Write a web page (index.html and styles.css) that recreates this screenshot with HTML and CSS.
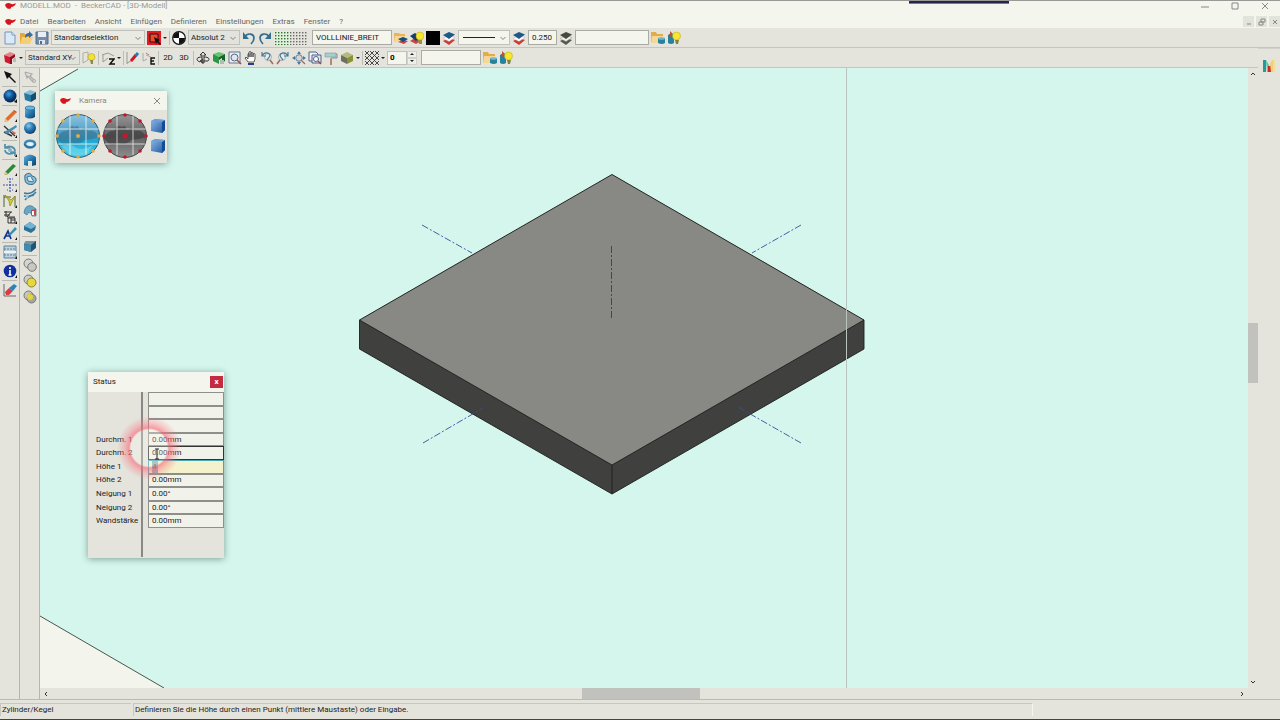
FILE: index.html
```html
<!DOCTYPE html>
<html lang="de">
<head>
<meta charset="utf-8">
<title>MODELL.MOD - BeckerCAD - [3D-Modell]</title>
<link rel="stylesheet" href="styles.css">
</head>
<body>
<svg class="defs" aria-hidden="true">
  <defs>
    <linearGradient id="blue" x1="0" y1="0" x2="1" y2="1"><stop offset="0" stop-color="#6fb4dc"/><stop offset=".5" stop-color="#2678ad"/><stop offset="1" stop-color="#0b3e6c"/></linearGradient>
    <radialGradient id="ball" cx=".38" cy=".32" r=".75"><stop offset="0" stop-color="#8bc8ea"/><stop offset=".45" stop-color="#2c7fb8"/><stop offset="1" stop-color="#08355f"/></radialGradient>
    <radialGradient id="darkball" cx=".4" cy=".35" r=".7"><stop offset="0" stop-color="#3f9fe0"/><stop offset=".5" stop-color="#0d4a8a"/><stop offset="1" stop-color="#041c3c"/></radialGradient>
    <linearGradient id="sea" x1="0" y1="0" x2="0" y2="1"><stop offset="0" stop-color="#8cc4e2"/><stop offset=".45" stop-color="#4e9cc4"/><stop offset=".6" stop-color="#1fa5cf"/><stop offset="1" stop-color="#48d0ea"/></linearGradient>
    <linearGradient id="smoke" x1="0" y1="0" x2="0" y2="1"><stop offset="0" stop-color="#959595"/><stop offset=".5" stop-color="#606060"/><stop offset="1" stop-color="#8d8d8d"/></linearGradient>
    <linearGradient id="box" x1="0" y1="0" x2="1" y2="1"><stop offset="0" stop-color="#8db9e6"/><stop offset="1" stop-color="#1b55a2"/></linearGradient>
    <pattern id="dots" width="3" height="3" patternUnits="userSpaceOnUse"><rect x="1" y="1" width="1.400" height="1.400" fill="#2d7030"/></pattern>
    <pattern id="dotsgrey" width="3" height="3" patternUnits="userSpaceOnUse"><rect x="1" y="1" width="1.400" height="1.400" fill="#666"/></pattern>
  </defs>
  <symbol id="logo" viewBox="0 0 12 8"><path d="M0 3C1 1 3 0 5 1L8 2 12 1C11 4 9 5 7 5L6 7 3 7 1 5Z" fill="#d8141c"/></symbol>
  <symbol id="chev" viewBox="0 0 8 8"><path d="M1.500 3l2.500 2.500L6.500 3" fill="none" stroke="#777" stroke-width=".9"/></symbol>
  <symbol id="new" viewBox="0 0 14 14"><path d="M2 1h7l3 3v9H2z" fill="#d9e9f7" stroke="#7795b5"/><path d="M9 1v3h3" fill="#fff" stroke="#7795b5"/></symbol>
  <symbol id="open" viewBox="0 0 14 14"><path d="M1 2h4l1 1h5v10H1z" fill="#e2a83b"/><path d="M3 6h11l-3 7H1z" fill="#f5cf73"/><path d="M6 7c0-4 2-5 4-5V0l4 4-4 3V5C8 5 7 6 6 7" fill="#356da8"/></symbol>
  <symbol id="save" viewBox="0 0 14 14"><path d="M1 1h12v12H1z" fill="#748ba9" stroke="#526c8c"/><path d="M3 1h8v5H3z" fill="#e8eef5"/><path d="M4 9h6v4H4z" fill="#dfe5ec"/><path d="M5 10h2v3H5z" fill="#526c8c"/></symbol>
  <symbol id="pick" viewBox="0 0 14 14"><path d="M0 0h14v14H0z" fill="#e41820"/><path d="M3 3h8v8H3z" fill="#e84a2a" stroke="#301010"/><path d="M7 6l6 3-2 1 3 3-1 1-3-3-1 2z" fill="#111"/></symbol>
  <symbol id="origin" viewBox="0 0 14 14"><circle cx="7" cy="7" r="6.300" fill="#fff" stroke="#111" stroke-width="1.200"/><path d="M7 7V1A6 6 0 0 0 1 7zM7 7v6A6 6 0 0 0 13 7z" fill="#111"/></symbol>
  <symbol id="undo" viewBox="0 0 14 14"><path d="M2.500 6C6 1 12 3 12 7c0 3-1 4-3 6" fill="none" stroke="#356d8c" stroke-width="1.700"/><path d="M1 1v7h6z" fill="#356d8c"/></symbol>
  <symbol id="redo" viewBox="0 0 14 14"><path d="M11.500 6C8 1 2 3 2 7c0 3 1 4 3 6" fill="none" stroke="#356d8c" stroke-width="1.700"/><path d="M13 1v7H7z" fill="#356d8c"/></symbol>
  <symbol id="grid" viewBox="0 0 34 14"><path d="M0 0h16v14H0z" fill="#e0f0dc"/><path d="M0 0h16v14H0z" fill="url(#dots)"/><path d="M16 0h17v14H16z" fill="url(#dotsgrey)"/></symbol>
  <symbol id="layers" viewBox="0 0 14 14"><path d="M1 10l6-3 6 2-6 5z" fill="#d03a34"/><path d="M1 7.500l6-3 6 2-6 4z" fill="#fff" stroke="#aaa" stroke-width=".4"/><path d="M1 4l6-3 6 2.500L7 8z" fill="#1d5a8c"/></symbol>
  <symbol id="layersgrey" viewBox="0 0 14 14"><path d="M1 10l6-3 6 2-6 5z" fill="#555850"/><path d="M1 7.500l6-3 6 2-6 4z" fill="#f0f0ea" stroke="#888" stroke-width=".4"/><path d="M1 4l6-3 6 2.500L7 8z" fill="#454942"/></symbol>
  <symbol id="folderlayers" viewBox="0 0 14 14"><path d="M0 2h5l1 1h5v8H0z" fill="#e9b45c"/><path d="M1 5h10v6H0z" fill="#f7d794"/><path d="M4 11l5-2 5 1-4 3z" fill="#c44"/><path d="M4 8l5-2 5 2-5 3z" fill="#174d78"/></symbol>
  <symbol id="folderdb" viewBox="0 0 14 14"><path d="M0 1h5l1 2h6v9H0z" fill="#e2ac4c"/><path d="M1 5h11v7H0z" fill="#f7d794"/><path d="M7 7h7v5q-3 2-7 0z" fill="#28829c"/><ellipse cx="10.500" cy="7.500" rx="3.500" ry="1.300" fill="#73b8c7"/></symbol>
  <symbol id="bulblayers" viewBox="0 0 14 14"><path d="M0 10l5-3 6 3-5 3z" fill="#c44"/><path d="M0 5l5-3 6 4-5 4z" fill="#173f66"/><circle cx="10" cy="5" r="4" fill="#f7e72e" stroke="#b5a01c" stroke-width=".5"/><path d="M8 9h4v4H9z" fill="#9a8f45"/></symbol>
  <symbol id="bulbdb" viewBox="0 0 14 14"><path d="M1 4q3-3 6 0v8q-3 2-6 0z" fill="#28829c"/><path d="M3 0l3 3-3 3z" fill="#c54e34"/><circle cx="9.500" cy="5" r="4" fill="#f7e72e" stroke="#b5a01c" stroke-width=".5"/><path d="M8 9h4l-1 4H9z" fill="#82833d"/></symbol>
  <symbol id="redcube" viewBox="0 0 14 14"><path d="M1 4l6-3 5 2-5 3z" fill="#e8808a"/><path d="M1 4l6 2v7l-5-2z" fill="#cd1c30"/><path d="M7 6l5-3v3L9 8v5H7z" fill="#8c1020"/><path d="M10 7h3v4h-3z" fill="#bbb"/></symbol>
  <symbol id="planebulb" viewBox="0 0 14 14"><path d="M1 2l5-1v8l-5 3z" fill="#e3e4dc" stroke="#999" stroke-width=".7"/><circle cx="9.500" cy="6" r="3.500" fill="#f4e32c" stroke="#a59520" stroke-width=".5"/><path d="M8 9h3v4H9z" fill="#8b8a4a"/></symbol>
  <symbol id="planez" viewBox="0 0 14 14"><path d="M1 4l6-2 6 3M2 4v7l5-4" fill="none" stroke="#999"/><path d="M8 8h5l-4 5h5" fill="none" stroke="#111" stroke-width="1.500"/></symbol>
  <symbol id="redpen" viewBox="0 0 14 14"><path d="M1 1v12M1 12l6-3" stroke="#999"/><path d="M5 10l5-6" stroke="#d01828" stroke-width="3"/><path d="M9.500 5L12 2" stroke="#257fb4" stroke-width="3"/></symbol>
  <symbol id="planee" viewBox="0 0 14 14"><path d="M1 2v8l4-2M4 4l5 2" fill="none" stroke="#aaa"/><path d="M4 2l3 2" stroke="#b97771"/><path d="M13 7H9v6h4M9 10h3" fill="none" stroke="#111" stroke-width="1.400"/></symbol>
  <symbol id="rotate3d" viewBox="0 0 14 14"><path d="M7 1L4 4h2v2C1 6 0 8 2 10l2 1M7 1l3 3H8v8H6V6M8 6c5 0 6 2 4 4H5M7 8l-3 2 3 2" fill="none" stroke="#333" stroke-width="1"/></symbol>
  <symbol id="greencube" viewBox="0 0 14 14"><path d="M1 3l6-2 6 2-6 3z" fill="#68c46e"/><path d="M1 3l6 3v7l-6-3z" fill="#2a9742"/><path d="M7 6l6-3v7l-3 2V7L7 9z" fill="#15652b"/><path d="M8 9h4v4H8z" fill="#aebcb2"/></symbol>
  <symbol id="zoomwin" viewBox="0 0 14 14"><path d="M1 1h11v11H1z" fill="#edf0f0" stroke="#687390"/><circle cx="6.500" cy="6.500" r="3.500" fill="#dce7ee" stroke="#556783"/><path d="M9 9l4 4" stroke="#98504c" stroke-width="1.600"/></symbol>
  <symbol id="hand" viewBox="0 0 14 14"><path d="M4 11L1 7l1-1 2 2V3q1-1 1 0v3-5q1-1 2 0v5-4q1-1 2 0v4-3q2-1 2 0v5l-1 3z" fill="#fff" stroke="#333" stroke-width=".8"/><path d="M4 12h6v2H4z" fill="#253b8f"/></symbol>
  <symbol id="zoomback" viewBox="0 0 14 14"><circle cx="8" cy="6" r="3.500" fill="#e4eef0" stroke="#90a4aa" stroke-width=".8"/><path d="M2 1v4h4M2 5c2-4 7-4 8-1 0 2-1 3-3 5" fill="none" stroke="#477994" stroke-width="1.200"/><path d="M10 9l3 4" stroke="#a56a60" stroke-width="1.500"/></symbol>
  <symbol id="pan4" viewBox="0 0 14 14"><path d="M7 0l2 3H5zM7 14l2-3H5zM0 7l3-2v4zM14 7l-3-2v4z" fill="#4779a2"/><circle cx="7" cy="7" r="3.300" fill="#cbd8df" stroke="#6e7e88"/><path d="M9 9l4 4" stroke="#aa6660" stroke-width="1.300"/></symbol>
  <symbol id="pages" viewBox="0 0 14 14"><path d="M1 1h7l2 2v7H1z" fill="#f1f2f5" stroke="#526089"/><path d="M4 4h9v8H4z" fill="#dfe5ed" stroke="#526089"/><circle cx="8" cy="8" r="2.500" fill="#fff" stroke="#4f6484"/><path d="M10 10l3 3" stroke="#944" stroke-width="1.300"/></symbol>
  <symbol id="roller" viewBox="0 0 14 14"><path d="M1 2h11v4H1z" fill="#a8ced1" stroke="#719ca0" stroke-width=".6"/><path d="M12 3h1v4H7v2" fill="none" stroke="#888"/><path d="M6 8h2v6H6z" fill="#b48b6a"/></symbol>
  <symbol id="olivecube" viewBox="0 0 14 14"><path d="M1 4l6-3 6 3-6 3z" fill="#b4bb7a"/><path d="M1 4l6 3v6l-6-3z" fill="#6c7061"/><path d="M7 7l6-3v6l-6 3z" fill="#8b9135"/></symbol>
  <symbol id="hatch" viewBox="0 0 14 14"><path d="M0 4l4-4M0 9L9 0M0 14L14 0M5 14l9-9M10 14l4-4M10 0l4 4M5 0l9 9M0 0l14 14M0 5l9 9M0 10l4 4" stroke="#383838" stroke-width=".9"/></symbol>
  <symbol id="em" viewBox="0 0 14 14"><path d="M1 1h3v12H1z" fill="#239c94"/><path d="M4 1l3 5v7H5z" fill="#56c7b0"/><path d="M6 7h3v6H6z" fill="#d02b28"/><path d="M8 5l2-4h1v12H9z" fill="#ead27a"/><path d="M11 1h2v12h-2z" fill="#f0dd96"/></symbol>
  <symbol id="arrow" viewBox="0 0 14 14"><path d="M1 1l8 3-2 2 6 6-1 1-6-6-2 2z" fill="#111"/></symbol>
  <symbol id="ghost" viewBox="0 0 14 14"><path d="M2 2l7 2-2 2 4 4M2 2l2 6 1-2 5 6" fill="none" stroke="#aaa" stroke-width="1.200"/><circle cx="11" cy="11" r="1.500" fill="none" stroke="#aaa"/></symbol>
  <symbol id="sphere" viewBox="0 0 14 14"><circle cx="7" cy="7" r="6.500" fill="url(#darkball)"/><path d="M11 13l3-3v4z" fill="#111"/></symbol>
  <symbol id="pencil" viewBox="0 0 14 14"><path d="M2 11l8-8 3 2-8 8-3 1z" fill="#e06d2a"/><path d="M2 10l3 3-4 1z" fill="#e8c49a"/><path d="M10 3l1-1 3 2-1 1z" fill="#b94e38"/><path d="M12 14l2-3v3z" fill="#111"/></symbol>
  <symbol id="tools" viewBox="0 0 14 14"><path d="M1 2l11 10M1 8l8 4" stroke="#333" stroke-width="1.400"/><path d="M1 8l9-5 3-2 1 2-10 7z" fill="#458cae"/><path d="M8 6l5 3-2 2z" fill="#b66"/><path d="M12 14l2-3v3z" fill="#111"/></symbol>
  <symbol id="spin" viewBox="0 0 14 14"><path d="M2 1v4h5M2 5c5-4 10 0 10 3M12 13V9H7M12 9C7 13 2 10 2 7" fill="none" stroke="#528fac" stroke-width="1.700"/><circle cx="7" cy="7" r="2" fill="#8cb2c1"/><path d="M12 14l2-3v3z" fill="#111"/></symbol>
  <symbol id="greenpen" viewBox="0 0 14 14"><path d="M2 10l8-8 3 2-8 8-3 1z" fill="#2b8a38"/><path d="M2 9l3 3-4 1z" fill="#dcc58e"/><path d="M12 14l2-3v3z" fill="#111"/></symbol>
  <symbol id="cross" viewBox="0 0 14 14"><path d="M7 0v14M0 7h14M4 1h1M9 1h1M4 12h1M9 12h1" stroke="#4052a5" stroke-width="1.200" stroke-dasharray="2 1"/><path d="M12 14l2-3v3z" fill="#111"/></symbol>
  <symbol id="measure" viewBox="0 0 14 14"><path d="M1 1v12M12 2v11M1 3h7" stroke="#4d622d"/><path d="M2 1l6 5 4-4-5 10-1-5z" fill="#d6cb2c" stroke="#888624" stroke-width=".7"/><path d="M12 14l2-3v3z" fill="#111"/></symbol>
  <symbol id="dim" viewBox="0 0 14 14"><path d="M1 2h8M1 5h6M3 1v6M8 2L4 7h8M5 8h7v5H5zM8 8v5M8 10h4" fill="none" stroke="#222" stroke-width=".9"/><path d="M12 14l2-3v3z" fill="#111"/></symbol>
  <symbol id="text" viewBox="0 0 14 14"><path d="M1 13L5 5l3 8M3 10h4" fill="none" stroke="#17358c" stroke-width="1.700"/><path d="M6 8l6-7 2 2-7 7z" fill="#3b8fae"/><path d="M12 14l2-3v3z" fill="#111"/></symbol>
  <symbol id="table" viewBox="0 0 14 14"><path d="M1 1h12v12H1z" fill="#bcd0dd" stroke="#5f8099"/><path d="M1 4h12M1 10h12" stroke="#5f8099" stroke-dasharray="2 1"/><path d="M1 6h12v2H1z" fill="#edf3f3"/><path d="M12 14l2-3v3z" fill="#111"/></symbol>
  <symbol id="info" viewBox="0 0 14 14"><circle cx="7" cy="7" r="6.300" fill="#1030a0"/><path d="M7 3v2M7 6v5M5.500 11h3" stroke="#fff" stroke-width="1.600"/><path d="M12 14l2-3v3z" fill="#111"/></symbol>
  <symbol id="eraser" viewBox="0 0 14 14"><path d="M1 1v12h12" fill="none" stroke="#666"/><path d="M2 9l4-4 4 3-4 4H3z" fill="#d83d44"/><path d="M6 5l5-4 3 2-4 5z" fill="#2c83b4"/></symbol>
  <symbol id="cube" viewBox="0 0 14 14"><path d="M1 4l6-3 6 2-5 3z" fill="#82bddb"/><path d="M1 4l7 2v7l-6-2z" fill="#28789f"/><path d="M8 6l5-3v7l-5 3z" fill="#164c70"/></symbol>
  <symbol id="cyl" viewBox="0 0 14 14"><path d="M2 3v9q5 3 10 0V3z" fill="url(#blue)"/><ellipse cx="7" cy="3" rx="5" ry="2" fill="#6cb7df" stroke="#236896" stroke-width=".7"/></symbol>
  <symbol id="ball2" viewBox="0 0 14 14"><circle cx="7" cy="7" r="6" fill="url(#ball)"/></symbol>
  <symbol id="torus" viewBox="0 0 14 14"><ellipse cx="7" cy="7" rx="5" ry="3.300" fill="#e6f1f1" stroke="#3d86b4" stroke-width="2.600"/><path d="M1 7q6 8 12 0" fill="none" stroke="#205b8a" stroke-width=".8"/></symbol>
  <symbol id="arch" viewBox="0 0 14 14"><path d="M1 4q6-5 12 0v8l-4 1V8H5v5l-4-1z" fill="url(#blue)"/></symbol>
  <symbol id="extrude" viewBox="0 0 14 14"><path d="M2 3q5-4 7 1 5 1 4 5-2 5-8 3-4-1-3-9z" fill="#8bbcd4" stroke="#386b8b"/><path d="M4 5q5-2 5 2 2 1 1 3l-5-1z" fill="#d9e9ee" stroke="#397ba3"/></symbol>
  <symbol id="sweep" viewBox="0 0 14 14"><path d="M1 5q7 2 12-4M1 8q8 1 12-4M2 12q3-4 9-5" fill="none" stroke="#3a7c9e" stroke-width="1.500"/><path d="M2 6l4 1-2 5z" fill="#a8c8d8"/></symbol>
  <symbol id="half" viewBox="0 0 14 14"><path d="M1 9q1-9 8-7l4 3v7H9l-1-3q-3-2-4 2z" fill="#6aa6c6" stroke="#367494" stroke-width=".7"/><path d="M8 6l5-1v6H8z" fill="#c04a4d"/><path d="M9 7h2v4H9z" fill="#fff"/></symbol>
  <symbol id="wedge" viewBox="0 0 14 14"><path d="M1 6l6-4 6 4-1 4-4 3-7-3z" fill="#2c7396"/><path d="M1 6l6-4 6 4-5 3z" fill="#75b4d2"/></symbol>
  <symbol id="rounded" viewBox="0 0 14 14"><path d="M1 5q1-3 3-3l9 0v7l-5 4-7-2z" fill="#1f5577"/><path d="M1 5q1-3 3-3l9 0-5 4z" fill="#7596a4"/><path d="M1 5l7 1v7l-7-2z" fill="#448bab"/></symbol>
  <symbol id="union" viewBox="0 0 14 14"><circle cx="5.500" cy="5.500" r="4.500" fill="#d5d5cf" stroke="#777"/><circle cx="9" cy="9" r="4.300" fill="#c8c8c2" stroke="#777"/></symbol>
  <symbol id="minus" viewBox="0 0 14 14"><circle cx="5.500" cy="5.500" r="4.500" fill="#cecec8" stroke="#777"/><circle cx="8.500" cy="8.500" r="4.500" fill="#e6d83b" stroke="#888331"/></symbol>
  <symbol id="inter" viewBox="0 0 14 14"><circle cx="5.500" cy="5.500" r="4.500" fill="#c5c5bd" stroke="#777"/><circle cx="8.500" cy="8.500" r="4.500" fill="#a6a69b" stroke="#777"/><circle cx="7" cy="7" r="3" fill="#e2d53a"/></symbol>
  <symbol id="camcube" viewBox="0 0 16 16"><path d="M1 3l4-2 10 1v10l-3 3L1 13z" fill="url(#box)"/><path d="M12 4l3-2v10l-3 3z" fill="#164a92"/><path d="M1 3l4-2 10 1-3 2z" fill="#6f9fd6"/></symbol>
</svg>

<div class="app">
  <header class="titlebar">
    <svg class="logo"><use href="#logo"/></svg>
    <h1 class="title">MODELL.MOD  -  BeckerCAD - [3D-Modell]</h1>
    <div class="accent"></div>
    <div class="winbuttons">
      <button aria-label="Minimieren"><svg viewBox="0 0 8 8"><path d="M0 5h8"/></svg></button>
      <button aria-label="Maximieren"><svg viewBox="0 0 8 8"><path d="M1 1h6v6H1z"/></svg></button>
      <button aria-label="Schließen"><svg viewBox="0 0 8 8"><path d="M1 1l6 6M7 1L1 7"/></svg></button>
    </div>
  </header>
  <nav class="menubar">
    <svg class="logo"><use href="#logo"/></svg>
    <button>Datei</button><button>Bearbeiten</button><button>Ansicht</button><button>Einfügen</button><button>Definieren</button><button>Einstellungen</button><button>Extras</button><button>Fenster</button><button>?</button>
    <div class="docbuttons">
      <button aria-label="Dokument minimieren"><svg viewBox="0 0 8 8"><path d="M2 6h4"/></svg></button>
      <button aria-label="Dokument wiederherstellen"><svg viewBox="0 0 8 8"><path d="M3 1h4v3H3zM1 4h4v3H1z"/></svg></button>
      <button aria-label="Dokument schließen"><svg viewBox="0 0 8 8"><path d="M2 2l4 4M6 2L2 6"/></svg></button>
    </div>
  </nav>

  <div class="toolbar">
    <button class="tool" aria-label="Neu"><svg><use href="#new"/></svg></button>
    <button class="tool" aria-label="Öffnen"><svg><use href="#open"/></svg></button>
    <button class="tool" aria-label="Speichern"><svg><use href="#save"/></svg></button>
    <div class="combo wide"><select aria-label="Selektion"><option>Standardselektion</option></select><svg><use href="#chev"/></svg></div>
    <button class="tool" aria-label="Auswahl"><svg><use href="#pick"/></svg></button>
    <button class="more" aria-label="Mehr"></button>
    <i class="sep"></i>
    <button class="tool" aria-label="Ursprung"><svg><use href="#origin"/></svg></button>
    <div class="combo mid grey"><select aria-label="Koordinaten"><option>Absolut 2</option></select><svg><use href="#chev"/></svg></div>
    <button class="tool" aria-label="Rückgängig"><svg><use href="#undo"/></svg></button>
    <button class="tool" aria-label="Wiederholen"><svg><use href="#redo"/></svg></button>
    <button class="tool double" aria-label="Raster"><svg><use href="#grid"/></svg></button>
    <input class="field line" aria-label="Linienart" value="VOLLLINIE_BREIT">
    <button class="tool" aria-label="Layer öffnen"><svg><use href="#folderlayers"/></svg></button>
    <button class="tool" aria-label="Layer anzeigen"><svg><use href="#bulblayers"/></svg></button>
    <button class="tool black" aria-label="Farbe"></button>
    <button class="tool" aria-label="Farbe von Layer"><svg><use href="#layers"/></svg></button>
    <div class="combo mid stroke"><select aria-label="Strichart"><option aria-label="Volllinie"></option></select><span class="rule"></span><svg><use href="#chev"/></svg></div>
    <button class="tool" aria-label="Strichart von Layer"><svg><use href="#layers"/></svg></button>
    <input class="field short" aria-label="Strichstärke" value="0.250">
    <button class="tool" aria-label="Stärke von Layer"><svg><use href="#layersgrey"/></svg></button>
    <input class="field long" aria-label="Gruppe">
    <button class="tool" aria-label="Gruppe öffnen"><svg><use href="#folderdb"/></svg></button>
    <button class="tool" aria-label="Gruppe anzeigen"><svg><use href="#bulbdb"/></svg></button>
  </div>

  <div class="body">
    <div class="left">
      <div class="toolbar">
        <button class="tool" aria-label="Arbeitsebene"><svg><use href="#redcube"/></svg></button>
        <button class="more" aria-label="Mehr"></button>
        <div class="combo plane grey"><select aria-label="Ebene"><option>Standard XY</option></select><svg><use href="#chev"/></svg></div>
        <button class="tool" aria-label="Ebene anzeigen"><svg><use href="#planebulb"/></svg></button>
        <i class="sep"></i>
        <button class="tool" aria-label="Ebene Z"><svg><use href="#planez"/></svg></button>
        <button class="more" aria-label="Mehr"></button>
        <i class="sep"></i>
        <button class="tool" aria-label="Ebene zeichnen"><svg><use href="#redpen"/></svg></button>
        <button class="tool" aria-label="Ebene E"><svg><use href="#planee"/></svg></button>
        <i class="sep"></i>
        <button class="tool">2D</button>
        <button class="tool">3D</button>
        <i class="sep"></i>
        <button class="tool" aria-label="Drehen"><svg><use href="#rotate3d"/></svg></button>
        <button class="tool" aria-label="Ansicht"><svg><use href="#greencube"/></svg></button>
        <button class="tool" aria-label="Zoom Fenster"><svg><use href="#zoomwin"/></svg></button>
        <button class="tool" aria-label="Verschieben"><svg><use href="#hand"/></svg></button>
        <button class="tool" aria-label="Zoom zurück"><svg><use href="#zoomback"/></svg></button>
        <button class="tool flip" aria-label="Zoom vor"><svg><use href="#zoomback"/></svg></button>
        <button class="tool" aria-label="Alles zeigen"><svg><use href="#pan4"/></svg></button>
        <button class="tool" aria-label="Zoom Seite"><svg><use href="#pages"/></svg></button>
        <button class="tool" aria-label="Neu zeichnen"><svg><use href="#roller"/></svg></button>
        <button class="tool" aria-label="Darstellung"><svg><use href="#olivecube"/></svg></button>
        <button class="more" aria-label="Mehr"></button>
        <i class="sep"></i>
        <button class="tool" aria-label="Schraffur"><svg><use href="#hatch"/></svg></button>
        <button class="more" aria-label="Mehr"></button>
        <div class="stepper"><input aria-label="Nummer" value="0"><button class="up" aria-label="Mehr"></button><button class="down" aria-label="Weniger"></button></div>
        <input class="field layer" aria-label="Folie">
        <button class="tool" aria-label="Folie öffnen"><svg><use href="#folderdb"/></svg></button>
        <button class="tool" aria-label="Folie anzeigen"><svg><use href="#bulbdb"/></svg></button>
      </div>

      <main class="workspace">
        <div class="palette">
          <button class="tool" aria-label="Selektieren"><svg><use href="#arrow"/></svg></button><hr>
          <button class="tool" aria-label="Körper"><svg><use href="#sphere"/></svg></button><hr>
          <button class="tool" aria-label="Zeichnen"><svg><use href="#pencil"/></svg></button>
          <button class="tool" aria-label="Bearbeiten"><svg><use href="#tools"/></svg></button><hr>
          <button class="tool" aria-label="Transformieren"><svg><use href="#spin"/></svg></button><hr>
          <button class="tool" aria-label="Stift"><svg><use href="#greenpen"/></svg></button>
          <button class="tool" aria-label="Hilfslinien"><svg><use href="#cross"/></svg></button>
          <button class="tool" aria-label="Messen"><svg><use href="#measure"/></svg></button>
          <button class="tool" aria-label="Bemaßen"><svg><use href="#dim"/></svg></button>
          <button class="tool" aria-label="Text"><svg><use href="#text"/></svg></button><hr>
          <button class="tool" aria-label="Tabelle"><svg><use href="#table"/></svg></button><hr>
          <button class="tool" aria-label="Info"><svg><use href="#info"/></svg></button><hr>
          <button class="tool" aria-label="Löschen"><svg><use href="#eraser"/></svg></button>
        </div>
        <div class="palette">
          <button class="tool" aria-label="Punktfang"><svg><use href="#ghost"/></svg></button><hr>
          <button class="tool" aria-label="Quader"><svg><use href="#cube"/></svg></button>
          <button class="tool" aria-label="Zylinder/Kegel"><svg><use href="#cyl"/></svg></button>
          <button class="tool" aria-label="Kugel"><svg><use href="#ball2"/></svg></button>
          <button class="tool" aria-label="Torus"><svg><use href="#torus"/></svg></button>
          <button class="tool" aria-label="Profil"><svg><use href="#arch"/></svg></button><hr>
          <button class="tool" aria-label="Extrusion"><svg><use href="#extrude"/></svg></button>
          <button class="tool" aria-label="Pfad"><svg><use href="#sweep"/></svg></button>
          <button class="tool" aria-label="Rotation"><svg><use href="#half"/></svg></button>
          <button class="tool" aria-label="Fläche"><svg><use href="#wedge"/></svg></button><hr>
          <button class="tool" aria-label="Verrunden"><svg><use href="#rounded"/></svg></button><hr>
          <button class="tool" aria-label="Vereinen"><svg><use href="#union"/></svg></button>
          <button class="tool" aria-label="Abziehen"><svg><use href="#minus"/></svg></button>
          <button class="tool" aria-label="Schnittmenge"><svg><use href="#inter"/></svg></button>
        </div>

        <div class="view">
          <div class="canvas">
            <svg class="scene" viewBox="40 68 1208 620" preserveAspectRatio="xMinYMin slice" role="img" aria-label="3D-Modell einer Platte">
              <path d="M40 68h38v1L40 91zM40 616L164 688H40z" fill="#f3f4ec"/>
              <path d="M78 69L40 91M40 616L164 688" stroke="#4a5650" fill="none"/>
              <path d="M612 174.500L864 320v29L612 494 359.500 349V320z" fill="#40403e"/>
              <path d="M612 174.500L864 320 612 465 359.500 320z" fill="#888884"/>
              <path d="M612 174.500L864 320v29L612 494 359.500 349V320zM359.500 320L612 465 864 320M612 465v29" fill="none" stroke="#1c1f1d" stroke-width=".9"/>
              <path d="M422 225l50 28M801 225l-49 28M423 443l60-35M801 443l-63-36" fill="none" stroke="#3a4c9c" stroke-width=".9" stroke-dasharray="7 2 2 2"/>
              <path d="M611.500 246v74" fill="none" stroke="#3a4090" stroke-dasharray="7 2 2 2"/>
              <path d="M846.500 68v620" stroke="#b9c4bf"/>
            </svg>

            <section class="window camera" aria-label="Kamera">
              <header><svg class="logo"><use href="#logo"/></svg><h2>Kamera</h2><button class="close" aria-label="Schließen"><svg viewBox="0 0 8 8"><path d="M1 1l6 6M7 1L1 7"/></svg></button></header>
              <div class="camera-body">
                <svg viewBox="0 0 46 46"><circle cx="23" cy="23" r="21.500" fill="url(#sea)" stroke="#31566a"/><path d="M2 25q5-9 10-7 3-7 8-4 3-3 5 3 6-5 8 1 7-2 11 6-8 3-15 3-5 6-13 3-7 6-14-5z" fill="#376b86" opacity=".55"/><path d="M6 33q8-4 14 1t18-2l-5 8q-10 5-20 0z" fill="#7fe0f0" opacity=".5"/><path d="M15 3v39M31 3v39M3 31h40M2 16h42" stroke="#fff" opacity=".75"/><g fill="#e0aa49"><circle cx="23" cy="2" r="1.800"/><circle cx="23" cy="44" r="1.800"/><circle cx="2" cy="23" r="1.800"/><circle cx="44" cy="23" r="1.800"/><circle cx="8" cy="8" r="1.800"/><circle cx="38" cy="8" r="1.800"/><circle cx="8" cy="38" r="1.800"/><circle cx="38" cy="38" r="1.800"/><circle cx="23" cy="23" r="2"/></g></svg>
                <svg viewBox="0 0 46 46"><circle cx="23" cy="23" r="21.500" fill="url(#smoke)" stroke="#444"/><path d="M2 25q5-9 10-7 3-7 8-4 3-3 5 3 6-5 8 1 7-2 11 6-8 3-15 3-5 6-13 3-7 6-14-5z" fill="#383838" opacity=".6"/><path d="M15 3v39M31 3v39M3 31h40M2 16h42" stroke="#fff" opacity=".7"/><g fill="#c01832"><circle cx="23" cy="2" r="1.800"/><circle cx="23" cy="44" r="1.800"/><circle cx="2" cy="23" r="1.800"/><circle cx="44" cy="23" r="1.800"/><circle cx="8" cy="8" r="1.800"/><circle cx="38" cy="8" r="1.800"/><circle cx="8" cy="38" r="1.800"/><circle cx="38" cy="38" r="1.800"/><circle cx="23" cy="23" r="2.600"/></g></svg>
                <div class="cubes"><button aria-label="Ansicht oben"><svg><use href="#camcube"/></svg></button><button aria-label="Ansicht unten"><svg><use href="#camcube"/></svg></button></div>
              </div>
            </section>

            <section class="window status" aria-label="Status">
              <header><h2>Status</h2><button class="close" aria-label="Schließen">x</button></header>
              <form class="values">
                <div class="labels">
                  <span></span><span></span><span></span>
                  <label for="d1">Durchm. 1</label><label for="d2">Durchm. 2</label><label for="h1">Höhe 1</label><label for="h2">Höhe 2</label><label for="n1">Neigung 1</label><label for="n2">Neigung 2</label><label for="w">Wandstärke</label>
                </div>
                <div class="inputs">
                  <input aria-label="X"><input aria-label="Y"><input aria-label="Z">
                  <input id="d1" value="0.00mm"><input id="d2" class="hover" value="0.00mm"><input id="h1" class="active" value="4"><input id="h2" value="0.00mm"><input id="n1" value="0.00°"><input id="n2" value="0.00°"><input id="w" value="0.00mm">
                </div>
              </form>
              <div class="halo"></div>
              <svg class="beam" viewBox="0 0 6 12"><path d="M1 1h4M3 1v10M1 11h4" fill="none" stroke="#222"/></svg>
            </section>
          </div>
          <div class="vscroll"><svg viewBox="0 0 8 8"><path d="M2 5l2-2 2 2"/></svg><div class="thumb"></div><svg viewBox="0 0 8 8"><path d="M2 3l2 2 2-2"/></svg></div>
          <div class="hscroll"><svg viewBox="0 0 8 8"><path d="M5 2L3 4l2 2"/></svg><div class="thumb"></div><svg viewBox="0 0 8 8"><path d="M3 2l2 2-2 2"/></svg></div>
        </div>
      </main>
    </div>
    <aside class="dock"><button class="tool" aria-label="Module"><svg><use href="#em"/></svg></button></aside>
  </div>

  <footer class="statusbar"><div class="command">Zylinder/Kegel</div><div class="hint">Definieren Sie die Höhe durch einen Punkt (mittlere Maustaste) oder Eingabe.</div></footer>
</div>
</body>
</html>
```
FILE: styles.css
```css
* { box-sizing: border-box; }
body { margin: 0; font: 8px/10px Roboto, "Open Sans", sans-serif; color: #222; background: #e4e4dc; }
button, input, select { font: inherit; color: inherit; margin: 0; padding: 0; border: 0; background: none; border-radius: 0; min-width: 0; }
select { appearance: none; }
h1, h2 { margin: 0; font: inherit; }
svg { display: block; }
.defs { position: absolute; width: 0; height: 0; }
.logo { width: 11px; height: 8px; flex: none; }

.app { display: flex; flex-direction: column; height: 100vh; border-top: 1px solid #999a96; border-bottom: 1px solid #444; overflow: hidden; }

.titlebar { position: relative; display: flex; align-items: center; gap: 4px; height: 12px; padding: 0 11px 2px 5px; background: #f4f5ed; color: #999; }
.title { white-space: pre; }
.accent { position: absolute; top: -1px; left: 71%; width: 100px; height: 4px; background: #22264f; border-bottom: 1px solid #777b98; }
.winbuttons { display: flex; gap: 22px; margin-left: auto; }
.winbuttons svg, .docbuttons svg, .close svg { width: 8px; height: 8px; fill: none; stroke: #888; }

.menubar { display: flex; align-items: center; gap: 9px; height: 15px; padding: 2px 0 0 5px; background: #f4f5ed; color: #666; }
.menubar .logo { margin-right: -5px; }
.docbuttons { display: flex; gap: 2px; margin-left: auto; }
.docbuttons button { display: grid; place-items: center; width: 11px; height: 11px; background: #e2e3db; }

.toolbar { display: flex; align-items: center; gap: 2px; height: 20px; padding-left: 3px; border-bottom: 1px solid #c4c5be; flex: none; }
.tool { display: grid; place-items: center; width: 14px; height: 14px; flex: none; }
.tool svg { width: 14px; height: 14px; }
.double, .double svg { width: 34px; }
.flip { transform: scaleX(-1); }
.black { background: #000; }
.more { width: 4px; height: 14px; flex: none; display: grid; place-items: center; }
.more::before { content: ""; border: 2px solid transparent; border-top-color: #222; border-bottom: 0; }
.sep { width: 1px; height: 14px; background: #bcbdb5; flex: none; }
.combo { display: grid; grid-template-columns: 1fr 10px; align-items: center; height: 15px; border: 1px solid #c0c1ba; background: #e9eae2; flex: none; }
.combo select { grid-area: 1 / 1 / 2 / 3; height: 13px; padding-left: 2px; }
.combo > svg { grid-area: 1 / 2; width: 8px; height: 8px; pointer-events: none; }
.wide { width: 94px; }
.mid { width: 52px; }
.plane { width: 55px; }
.grey { background: #e2e3dc; }
.stroke { background: #f4f5ed; }
.rule { grid-area: 1 / 1; height: 1px; margin: 0 4px; background: #222; pointer-events: none; }
.field { height: 15px; padding: 0 3px; border: 1px solid #aaaba4; background: #f4f5ed; flex: none; }
.line { width: 80px; margin-left: 2px; }
.short { width: 29px; }
.long { width: 74px; }
.layer { width: 60px; margin-left: 2px; }
.stepper { display: grid; grid-template-columns: 20px 10px; grid-template-rows: 7px 7px; flex: none; }
.stepper input { grid-row: 1 / 3; width: 20px; padding-left: 2px; border: 1px solid #c0c1ba; background: #f4f5ed; color: #000; font-weight: bold; }
.stepper button { display: grid; place-items: center; background: #eeefe8; border: 1px solid #d0d1ca; }
.stepper button::before { content: ""; border: 2px solid transparent; }
.stepper .up::before { border-bottom-color: #222; border-top: 0; }
.stepper .down::before { border-top-color: #222; border-bottom: 0; }

.body { display: flex; flex: 1; min-height: 0; }
.left { display: flex; flex-direction: column; flex: 1; min-width: 0; }
.dock { width: 22px; padding: 10px 4px; border-top: 1px solid #d0d1ca; }
.workspace { display: flex; flex: 1; min-height: 0; }
.palette { display: flex; flex-direction: column; align-items: center; gap: 2px; width: 20px; padding-top: 2px; border-right: 1px solid #b5b6af; }
.palette hr { width: 15px; height: 1px; margin: 0; border: 0; background: #b9bab2; }

.view { display: grid; grid-template: 1fr 11px / 1fr 10px; flex: 1; min-width: 0; }
.canvas { position: relative; overflow: hidden; background: #d5f6ed; }
.scene { width: 100%; height: 100%; }
.vscroll, .hscroll { display: flex; align-items: center; justify-content: space-between; }
.vscroll { flex-direction: column; padding: 2px 0; }
.hscroll { padding: 0 2px; }
.vscroll svg, .hscroll svg { width: 8px; height: 8px; fill: none; stroke: #333; }
.thumb { background: #c1c2bd; }
.vscroll .thumb { width: 10px; height: 60px; margin-top: -50px; }
.hscroll .thumb { width: 118px; height: 11px; margin-left: -6px; }

.window { position: absolute; background: #e4e4dc; box-shadow: 0 1px 7px #7f9f96; }
.window header { display: flex; align-items: center; background: #f4f5ed; }
.close { margin-left: auto; }
.camera { left: 15px; top: 23px; width: 112px; }
.camera header { gap: 8px; height: 19px; padding: 0 6px 0 5px; color: #888; }
.camera-body { display: grid; grid-template-columns: 46px 46px 16px; gap: 1px; padding: 3px 0 4px; }
.camera-body > svg { width: 46px; height: 46px; }
.cubes { display: grid; gap: 4px; align-content: center; padding-left: 1px; }
.cubes svg { width: 16px; height: 16px; }

.status { left: 48px; top: 304px; width: 136px; padding-bottom: 1px; }
.status header { height: 20px; padding: 0 1px 0 5px; }
.status .close { width: 13px; height: 12px; background: #c32b43; color: #fff; line-height: 10px; font-weight: bold; }
.values { display: grid; grid-template-columns: 55px 1fr; }
.labels, .inputs { display: grid; grid-template-rows: repeat(10, 1fr); height: 165px; padding-bottom: 29px; }
.labels { padding-left: 8px; border-right: 2px solid #888984; }
.labels > * { align-self: center; white-space: nowrap; }
.inputs { padding-left: 5px; }
.inputs input { width: 100%; padding-left: 3px; border: 1px solid #8e8f8a; background: #f1f2ea; }
.inputs .hover { border-color: #333; }
.inputs .active { border-color: #47a6b2; background: linear-gradient(90deg, #f3f2cc 3px, #93aeb4 3px 9px, #f3f2cc 9px); color: #245a70; }
.halo { position: absolute; left: 29px; top: 44px; width: 64px; height: 64px; border-radius: 50%; background: radial-gradient(circle, rgba(250,250,242,.3) 0 18px, rgba(248,110,125,.65) 20px, rgba(248,120,132,.35) 25px, rgba(248,130,140,0) 32px); pointer-events: none; }
.beam { position: absolute; left: 66px; top: 76px; width: 6px; height: 12px; }

.statusbar { display: flex; gap: 2px; height: 20px; padding: 3px 0; border-top: 1px solid #b9bab3; flex: none; }
.statusbar div { border-top: 1px solid #c6c7c0; border-left: 1px solid #c6c7c0; padding: 1px 0 0 1px; }
.command { width: 131px; }
.hint { width: 900px; border-right: 1px solid #f4f5ed; }
```
